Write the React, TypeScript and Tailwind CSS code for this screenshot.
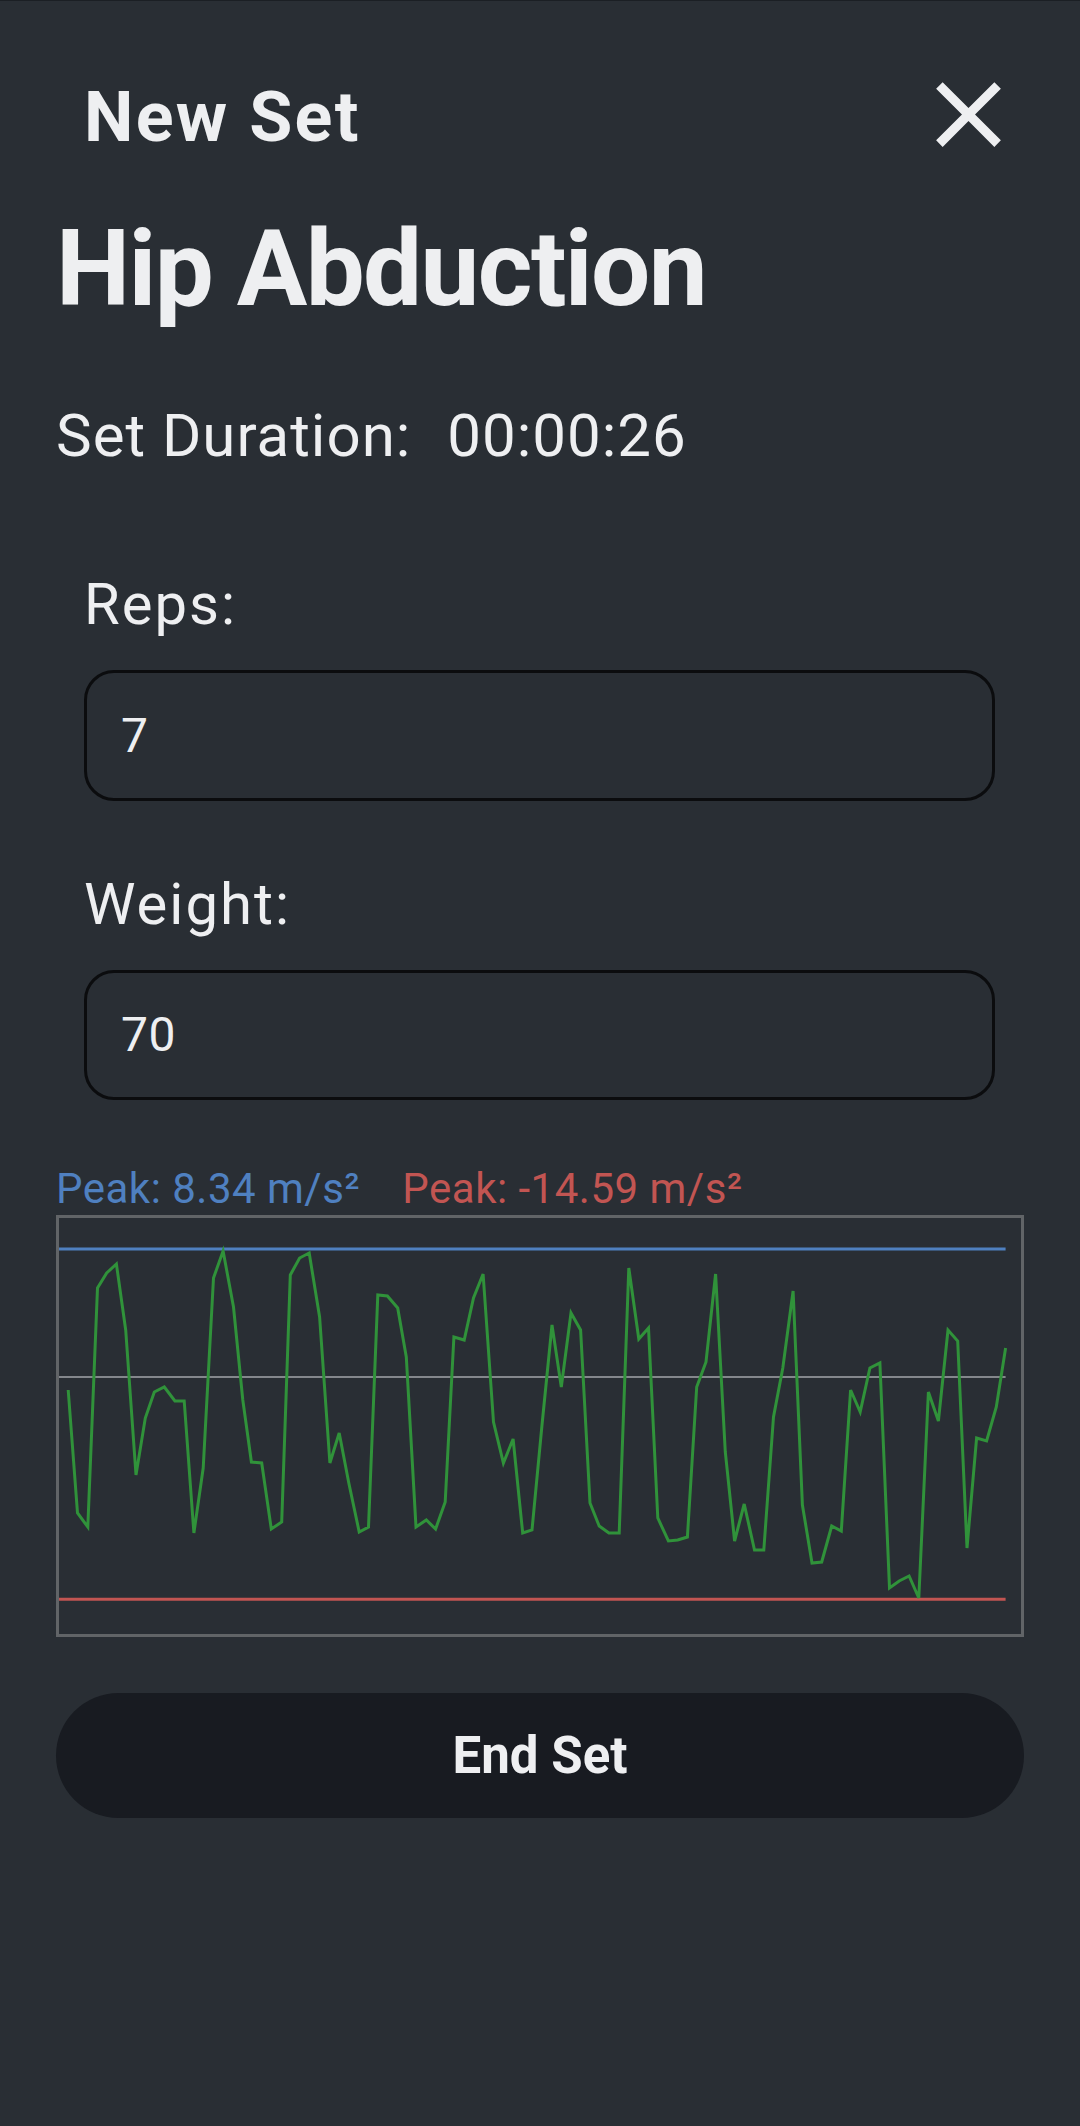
import React from "react";

const PTS: [number, number][] = [
  [68.2, 1390], [77.5, 1513], [87.8, 1527], [97.5, 1288], [106.7, 1273], [116.4, 1264],
  [125.7, 1330], [136, 1475], [145.3, 1418], [154.3, 1392], [164.3, 1387], [174.9, 1401],
  [184.2, 1401], [193.9, 1533], [203.2, 1468], [213.5, 1278], [223.1, 1251], [233.5, 1307],
  [242.8, 1400], [251.4, 1462], [261.7, 1463], [271.3, 1529], [281.7, 1522], [290.3, 1275],
  [299.6, 1258], [309.2, 1253], [319.6, 1317], [329.9, 1463], [339.2, 1433], [348.8, 1483],
  [359.2, 1532], [368.5, 1527], [377.8, 1295], [387.4, 1296], [397.7, 1308], [406.3, 1357],
  [416, 1527], [426.3, 1520], [435.6, 1529], [445.2, 1502], [453.9, 1337], [464.2, 1340],
  [473.5, 1298], [483.1, 1274], [493.5, 1422], [503.4, 1463], [513.1, 1439], [522.7, 1533],
  [532, 1530], [542, 1425], [552, 1325], [561.3, 1387], [571, 1313], [580.6, 1330],
  [590, 1503], [599.2, 1526], [608.9, 1533], [619.2, 1533], [628.8, 1268], [638.8, 1339],
  [648.5, 1328], [657.8, 1518], [668.4, 1541], [677.7, 1540], [687.4, 1537], [696.7, 1387],
  [706, 1362], [715.6, 1274], [725.3, 1452], [734.6, 1541], [744.2, 1504], [754.5, 1550],
  [763.8, 1550], [773.5, 1417], [782.8, 1368], [793.1, 1291], [802.4, 1505], [812, 1563],
  [821.7, 1562], [831.7, 1526], [841.3, 1531], [850.6, 1390], [860.2, 1412], [869.9, 1368],
  [879.9, 1363], [889.5, 1588], [899.2, 1581], [909.1, 1576], [918.8, 1598], [928.4, 1392],
  [938.4, 1421], [948, 1330], [957.7, 1341], [967, 1548], [976.6, 1438], [986.6, 1441],
  [996.3, 1407], [1005.6, 1348],
];

function CloseIcon() {
  return (
    <svg viewBox="0 0 24 24" className="w-[111px] h-[111px] shrink-0" fill="#eeeff1">
      <path d="M19 6.41L17.59 5 12 10.59 6.41 5 5 6.41 10.59 12 5 17.59 6.41 19 12 13.41 17.59 19 19 17.59 13.41 12z" />
    </svg>
  );
}

function Field({ label, value, labelMt, h }: { label: string; value: string; labelMt: string; h: string }) {
  return (
    <div className="flex flex-col">
      <div className={`${labelMt} text-[58px] leading-none tracking-[2px]`}>{label}</div>
      <div
        className={`mt-[37px] ${h} border-[3px] border-[#0b0c0e] rounded-[30px] flex items-center pl-[34px] text-[48px] leading-none tracking-[0.5px]`}
      >
        {value}
      </div>
    </div>
  );
}

export default function App() {
  const pts = PTS.map((p) => `${p[0]},${p[1]}`).join(" ");
  return (
    <div
      className="w-[1080px] h-[2126px] bg-[#292e34] border-t border-[#1b1f24] flex flex-col px-[56px] text-[#eeeff1] overflow-hidden"
      style={{ fontFamily: "Roboto, 'Noto Sans', sans-serif" }}
    >
      <div className="mt-[58px] flex justify-between items-start">
        <span className="ml-[28px] mt-[23px] text-[70px] leading-none font-bold tracking-[2.3px]">New Set</span>
        <CloseIcon />
      </div>

      <h1 className="mt-[47px] text-[105px] leading-none font-bold tracking-[-1.6px]">Hip Abduction</h1>

      <div className="mt-[84px] flex items-baseline text-[60px] leading-none tracking-[1px]">
        <span>Set Duration:</span>
        <span className="ml-[36px]">00:00:26</span>
      </div>

      <div className="pl-[28px] pr-[29px] flex flex-col">
        <Field label="Reps:" value="7" labelMt="mt-[109px]" h="h-[131px]" />
        <Field label="Weight:" value="70" labelMt="mt-[74px]" h="h-[130px]" />
      </div>

      <div className="mt-[68px] flex text-[42px] leading-none tracking-[0.5px]">
        <span className="text-[#4f80c0]">Peak: 8.34 m/s²</span>
        <span className="ml-[42px] text-[#c25552]">Peak: -14.59 m/s²</span>
      </div>

      <div className="mt-[5px] h-[422px] border-[3px] border-[#616467]">
        <svg viewBox="59 1218 962 416" className="w-full h-full block" preserveAspectRatio="none">
          <line x1="59" y1="1249" x2="1005.6" y2="1249" stroke="#4f80c0" strokeWidth="3" />
          <line x1="59" y1="1377" x2="1005.6" y2="1377" stroke="#a3a6aa" strokeWidth="1.5" />
          <line x1="59" y1="1599.3" x2="1005.6" y2="1599.3" stroke="#c25552" strokeWidth="3" />
          <polyline points={pts} fill="none" stroke="#30923a" strokeWidth="3" strokeLinejoin="miter" />
        </svg>
      </div>

      <button className="mt-[56px] h-[125px] w-full rounded-full bg-[#181b21] text-[51px] leading-none font-bold text-[#eeeff1] flex items-center justify-center">
        End Set
      </button>
    </div>
  );
}
